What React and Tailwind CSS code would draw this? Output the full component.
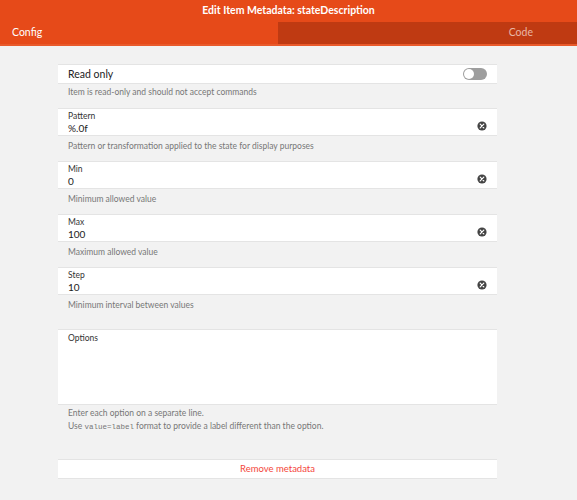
import React from 'react';

const font = { fontFamily: 'Lato, "Open Sans", sans-serif' };

function ClearIcon() {
    return (
        <svg width="10" height="10" viewBox="0 0 10 10" className="shrink-0">
            <circle cx="5" cy="5" r="4.6" fill="#444" />
            <path d="M3.2 3.2 L6.8 6.8 M6.8 3.2 L3.2 6.8" stroke="#fff" strokeWidth="1.2" strokeLinecap="round" />
        </svg>
    );
}

function Field({ label, value, help }) {
    return (
        <div>
            <div className="bg-white border-y border-[#e4e4e4] h-[28px] flex items-end pl-[10px] pr-[10px] pb-[2px]">
                <div className="flex-1 flex flex-col leading-none">
                    <span className="text-[8.5px] text-[#333] mb-[3px]">{label}</span>
                    <span className="text-[10px] text-[#222]">{value}</span>
                </div>
                <div className="mb-[2px]">
                    <ClearIcon />
                </div>
            </div>
            <div className="text-[8.5px] text-[#777] pl-[10px] pt-[4px] h-[25px] leading-[12px]">{help}</div>
        </div>
    );
}

export default function App() {
    return (
        <div className="w-[577px] h-[500px] bg-[#f2f2f2] flex flex-col" style={font}>
            <div className="bg-[#e64a19]">
                <div className="h-[22px] flex items-center justify-center text-white text-[10.5px] font-bold">
                    Edit Item Metadata: stateDescription
                </div>
                <div className="flex h-[22px] text-[10.5px]">
                    <div className="w-[278px] flex items-center pl-[12px] text-white">Config</div>
                    <div className="flex-1 bg-[#bf3a12] flex items-center justify-end pr-[44px] text-[#e8b7a6]">Code</div>
                </div>
                <div className="h-[2px] bg-[#e95a2b]" />
            </div>

            <div className="w-[439px] ml-[58px] mt-[18px] flex flex-col">
                <div>
                    <div className="bg-white border-y border-[#e4e4e4] h-[20px] flex items-center pl-[10px] pr-[10px]">
                        <span className="flex-1 text-[10.5px] text-[#222] pt-[1px]">Read only</span>
                        <div className="w-[24px] h-[12px] rounded-full bg-[#9e9e9e] flex items-center pl-[1px]">
                            <div className="w-[10px] h-[10px] rounded-full bg-white" />
                        </div>
                    </div>
                    <div className="text-[8.5px] text-[#777] pl-[10px] pt-[2px] h-[24px] leading-[12px]">Item is read-only and should not accept commands</div>
                </div>

                <Field label="Pattern" value="%.0f" help="Pattern or transformation applied to the state for display purposes" />
                <Field label="Min" value="0" help="Minimum allowed value" />
                <Field label="Max" value="100" help="Maximum allowed value" />
                <Field label="Step" value="10" help="Minimum interval between values" />

                <div className="mt-[9px] bg-white border-y border-[#e4e4e4] h-[76px] pl-[10px] pt-[4px] leading-none">
                    <div className="text-[8.5px] text-[#333]">Options</div>
                </div>
                <div className="text-[8.5px] text-[#777] pl-[10px] pt-[2px] leading-[13px]">
                    <div>Enter each option on a separate line.</div>
                    <div>
                        Use <code className="text-[7.5px]" style={{ fontFamily: '"Liberation Mono", monospace' }}>value=label</code> format to provide a label different than the option.
                    </div>
                </div>

                <div className="mt-[25px] bg-white border-y border-[#e4e4e4] h-[20px] flex items-center justify-center text-[9.5px] text-[#f4473b]">
                    Remove metadata
                </div>
            </div>
        </div>
    );
}
